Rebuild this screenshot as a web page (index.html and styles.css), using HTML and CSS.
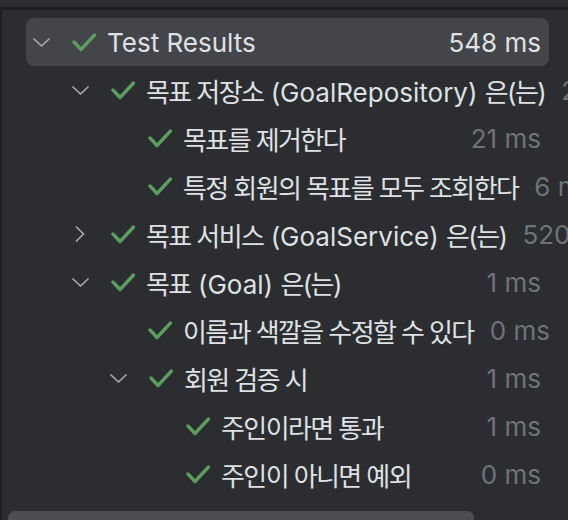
FILE: index.html
```html
<!DOCTYPE html>
<html lang="ko">
<head>
<meta charset="utf-8">
<title>Test Results</title>
<link rel="stylesheet" href="styles.css">
</head>
<body>
<div class="topbar"></div>
<div class="panel">
  <div class="tree">
    <div class="row selected l0">
      <span class="toggle"><svg class="chev" width="17" height="9" viewBox="0 0 17 9"><path d="M1 1 L8.5 8 L16 1"/></svg></span>
      <span class="check"><svg width="24" height="20" viewBox="0 0 24 20"><path d="M2 10 L9 17.5 L22.5 3"/></svg></span>
      <span class="name">Test Results</span>
      <span class="time">548 ms</span>
    </div>
    <div class="row l1">
      <span class="toggle"><svg class="chev" width="17" height="9" viewBox="0 0 17 9"><path d="M1 1 L8.5 8 L16 1"/></svg></span>
      <span class="check"><svg width="24" height="20" viewBox="0 0 24 20"><path d="M2 10 L9 17.5 L22.5 3"/></svg></span>
      <span class="name"><span class="ko">목표 저장소</span> (GoalRepository) <span class="ko">은(는)</span></span>
      <span class="time">23 ms</span>
    </div>
    <div class="row l2">
      <span class="check"><svg width="24" height="20" viewBox="0 0 24 20"><path d="M2 10 L9 17.5 L22.5 3"/></svg></span>
      <span class="name ko">목표를 제거한다</span>
      <span class="time">21 ms</span>
    </div>
    <div class="row l2">
      <span class="check"><svg width="24" height="20" viewBox="0 0 24 20"><path d="M2 10 L9 17.5 L22.5 3"/></svg></span>
      <span class="name ko">특정 회원의 목표를 모두 조회한다</span>
      <span class="time">6 ms</span>
    </div>
    <div class="row l1">
      <span class="toggle"><svg class="chev right" width="10" height="16" viewBox="0 0 10 16"><path d="M1.5 1 L8.5 8 L1.5 15"/></svg></span>
      <span class="check"><svg width="24" height="20" viewBox="0 0 24 20"><path d="M2 10 L9 17.5 L22.5 3"/></svg></span>
      <span class="name"><span class="ko">목표 서비스</span> (GoalService) <span class="ko">은(는)</span></span>
      <span class="time">520 ms</span>
    </div>
    <div class="row l1">
      <span class="toggle"><svg class="chev" width="17" height="9" viewBox="0 0 17 9"><path d="M1 1 L8.5 8 L16 1"/></svg></span>
      <span class="check"><svg width="24" height="20" viewBox="0 0 24 20"><path d="M2 10 L9 17.5 L22.5 3"/></svg></span>
      <span class="name"><span class="ko">목표</span> (Goal) <span class="ko">은(는)</span></span>
      <span class="time">1 ms</span>
    </div>
    <div class="row l2">
      <span class="check"><svg width="24" height="20" viewBox="0 0 24 20"><path d="M2 10 L9 17.5 L22.5 3"/></svg></span>
      <span class="name ko">이름과 색깔을 수정할 수 있다</span>
      <span class="time">0 ms</span>
    </div>
    <div class="row l2">
      <span class="toggle"><svg class="chev" width="17" height="9" viewBox="0 0 17 9"><path d="M1 1 L8.5 8 L16 1"/></svg></span>
      <span class="check"><svg width="24" height="20" viewBox="0 0 24 20"><path d="M2 10 L9 17.5 L22.5 3"/></svg></span>
      <span class="name ko">회원 검증 시</span>
      <span class="time">1 ms</span>
    </div>
    <div class="row l3">
      <span class="check"><svg width="24" height="20" viewBox="0 0 24 20"><path d="M2 10 L9 17.5 L22.5 3"/></svg></span>
      <span class="name ko">주인이라면 통과</span>
      <span class="time">1 ms</span>
    </div>
    <div class="row l3">
      <span class="check"><svg width="24" height="20" viewBox="0 0 24 20"><path d="M2 10 L9 17.5 L22.5 3"/></svg></span>
      <span class="name ko">주인이 아니면 예외</span>
      <span class="time">0 ms</span>
    </div>
  </div>
  <div class="scrollbar"></div>
</div>
</body>
</html>
```

FILE: styles.css
```css
html, body {
  margin: 0;
  padding: 0;
  width: 568px;
  height: 520px;
  overflow: hidden;
  background: #2b2d30;
}

body {
  font-family: Inter, "Noto Sans CJK KR", sans-serif;
  font-size: 26px;
  color: #dfe1e5;
}

.topbar {
  height: 7px;
  background: #2b2d30;
  border-bottom: 3px solid #1e1f22;
}

.panel {
  height: 510px;
  border-left: 2px solid #1e1f22;
  box-sizing: border-box;
  display: flex;
  flex-direction: column;
  position: relative;
}

.tree {
  padding-top: 8px;
  padding-left: 24px;
  flex: 1;
}

.row {
  width: 523px;
  height: 48px;
  box-sizing: border-box;
  padding-right: 8px;
  display: flex;
  align-items: center;
  white-space: nowrap;
  border-radius: 8px;
}

.row.selected {
  background: #43454a;
}

.l0 { padding-left: 7px; }
.l1 { padding-left: 46px; }
.l2 { padding-left: 84px; }
.l3 { padding-left: 122px; }

.l2 .check:first-child { margin-left: 38px; }
.l3 .check:first-child { margin-left: 38px; }

.toggle {
  width: 39px;
  flex: none;
  display: flex;
  align-items: center;
}

.chev path {
  fill: none;
  stroke: #a8abb0;
  stroke-width: 1.7;
  stroke-linecap: round;
  stroke-linejoin: round;
}

.chev.right {
  margin-left: 3px;
}

.check {
  width: 35px;
  flex: none;
  display: flex;
  align-items: center;
}

.check path {
  fill: none;
  stroke: #5c9e5f;
  stroke-width: 3.4;
  stroke-linecap: round;
  stroke-linejoin: round;
}

.name {
  flex: none;
}

.ko {
  letter-spacing: -1.6px;
}

.time {
  flex: none;
  margin-left: auto;
  padding-left: 16px;
  color: #6f737a;
}

.selected .time {
  color: #dfe1e5;
}

.scrollbar {
  position: absolute;
  left: 6px;
  bottom: -6px;
  width: 466px;
  height: 15px;
  border-radius: 7px;
  background: #4d4e52;
}
```
